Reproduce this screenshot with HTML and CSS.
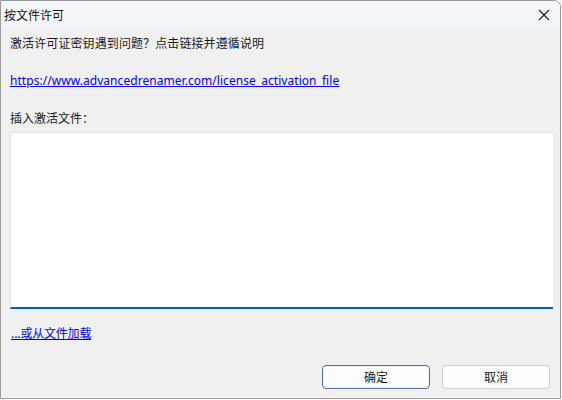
FILE: index.html
```html
<!DOCTYPE html>
<html lang="zh">
<head>
<meta charset="utf-8">
<title>按文件许可</title>
<link rel="stylesheet" href="styles.css">
</head>
<body>
<div class="window">
  <div class="titlebar">
    <span class="title">按文件许可</span>
    <span class="close">
      <svg width="12" height="12" viewBox="0 0 12 12"><path d="M1 1 L11 11 M11 1 L1 11" stroke="#1a1a1a" stroke-width="1.1" fill="none"/></svg>
    </span>
  </div>
  <div class="content">
    <p class="line intro">激活许可证密钥遇到问题？点击链接并遵循说明</p>
    <a class="link url" href="#">https://www.advancedrenamer.com/license_activation_file</a>
    <p class="line label">插入激活文件：</p>
    <div class="textarea"></div>
    <a class="link load" href="#">...或从文件加载</a>
    <div class="buttons">
      <button class="btn default">确定</button>
      <button class="btn">取消</button>
    </div>
  </div>
</div>
</body>
</html>
```
FILE: styles.css
```css
* { box-sizing: border-box; }
html, body { margin: 0; padding: 0; }
body {
  width: 562px;
  height: 400px;
  overflow: hidden;
  background: #ffffff;
  font-family: "Noto Sans CJK SC", "Noto Sans", sans-serif;
  font-size: 12px;
  color: #1a1a1a;
}
.window {
  width: 561px;
  height: 399px;
  background: #f0f0f0;
  border: 1px solid #9a9a9a;
  border-top-right-radius: 7px;
  display: flex;
  flex-direction: column;
  overflow: hidden;
}
.titlebar {
  height: 27px;
  flex: none;
  background: linear-gradient(#f4f7fc, #f1f4f9);
  display: flex;
  align-items: center;
  justify-content: space-between;
  padding: 0 10px 0 3px;
}
.title {
  font-size: 12px;
  line-height: 14px;
  color: #111;
}
.close {
  display: flex;
  width: 12px;
  height: 12px;
  margin-top: 1px;
}
.content {
  flex: 1;
  padding: 0 8px 0 9px;
  display: flex;
  flex-direction: column;
}
.line {
  margin: 0;
  line-height: 16px;
}
.intro {
  margin-top: 7px;
  letter-spacing: 0.1px;
}
.link {
  color: #0000ee;
  text-decoration: underline;
  line-height: 16px;
}
.url {
  margin-top: 22px;
  font-family: "Noto Sans", sans-serif;
  font-size: 12px;
  letter-spacing: 0.05px;
  align-self: flex-start;
}
.label {
  margin-top: 21px;
  letter-spacing: 0;
}
.textarea {
  margin-top: 6px;
  height: 177px;
  width: 543px;
  background: #ffffff;
  border-top: 1px solid #e4e4e4;
  border-left: 1px solid #e4e4e4;
  border-bottom: 2px solid #005fb8;
}
.load {
  margin-top: 16px;
  margin-left: 1px;
  align-self: flex-start;
  letter-spacing: -0.2px;
}
.buttons {
  margin-top: 24px;
  display: flex;
  justify-content: flex-end;
  gap: 12px;
  padding-right: 2px;
}
.btn {
  width: 108px;
  height: 24px;
  background: #fdfdfd;
  border: 1px solid #d0d0d0;
  border-radius: 4px;
  font-family: "Noto Sans CJK SC", sans-serif;
  font-size: 12px;
  color: #1a1a1a;
  padding: 0;
  line-height: 20px;
}
.btn.default {
  border: 1px solid #5a7490;
  box-shadow: inset 0 0 0 1px #e9f1fb;
}
```
